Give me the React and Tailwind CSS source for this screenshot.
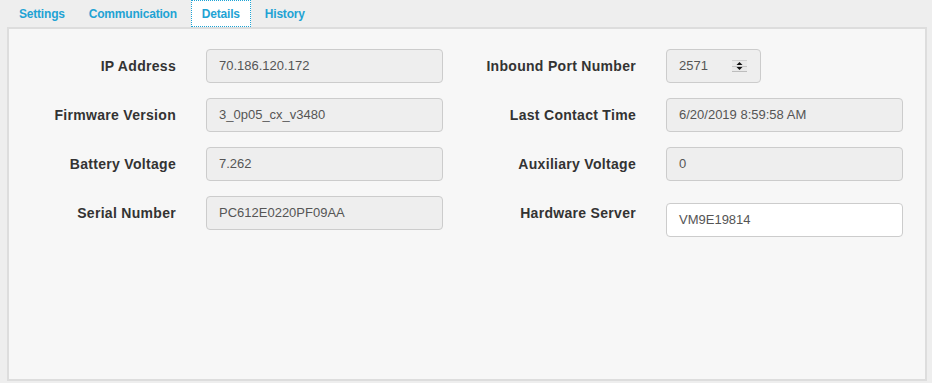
import React from "react";

const font = { fontFamily: '"Liberation Sans", Arial, sans-serif' };

function Label({ children }) {
  return (
    <div className="w-[167px] shrink-0 text-right text-[14px] font-bold leading-[16px] tracking-[0.3px] text-[#333]">
      {children}
    </div>
  );
}

function ReadOnly({ value }) {
  return (
    <div className="ml-[30px] flex h-[34px] w-[237px] shrink-0 items-center rounded-[4px] border border-[#cccccc] bg-[#eeeeee] px-[12px] text-[13px] text-[#555]">
      {value}
    </div>
  );
}

function Row({ label, value }) {
  return (
    <div className="flex h-[34px] items-center">
      <Label>{label}</Label>
      <ReadOnly value={value} />
    </div>
  );
}

function Spinner() {
  return (
    <svg width="15" height="12" viewBox="0 0 15 12" className="block">
      <rect x="0" y="0" width="15" height="12" fill="#e9e9e9" />
      <rect x="0" y="0" width="15" height="1" fill="#d0d0d0" />
      <rect x="0" y="11" width="15" height="1" fill="#bdbdbd" />
      <rect x="0" y="6" width="15" height="1" fill="#c4c4c4" />
      <polygon points="7.5,2 10.5,5 4.5,5" fill="#111" />
      <polygon points="4.5,7 10.5,7 7.5,10" fill="#111" />
    </svg>
  );
}

export default function App() {
  return (
    <div className="h-[383px] w-[932px] bg-[#eeeeee] pl-[7px] pr-[5px]" style={font}>
      <div className="flex h-[27px] items-stretch text-[12px] font-bold tracking-[-0.2px] text-[#1fa3d4]">
        <div className="mx-[2px] flex items-center px-[10px]">Settings</div>
        <div className="mx-[2px] flex items-center px-[10px]">Communication</div>
        <div className="mx-[2px] flex items-center border border-dotted border-[#1fa3d4] bg-white px-[10px]">Details</div>
        <div className="mx-[2px] flex items-center px-[10px]">History</div>
      </div>
      <div className="flex h-[354px] w-full border-2 border-[#dddddd] bg-[#f7f7f7] pt-[20px]">
        <div className="flex w-[460px] shrink-0 flex-col gap-[15px]">
          <Row label="IP Address" value="70.186.120.172" />
          <Row label="Firmware Version" value="3_0p05_cx_v3480" />
          <Row label="Battery Voltage" value="7.262" />
          <Row label="Serial Number" value="PC612E0220PF09AA" />
        </div>
        <div className="flex min-w-0 flex-1 flex-col gap-[15px]">
          <div className="flex h-[34px] items-center">
            <Label>Inbound Port Number</Label>
            <div className="ml-[30px] flex h-[34px] w-[95px] shrink-0 items-center justify-between rounded-[4px] border border-[#cccccc] bg-[#eeeeee] pl-[12px] pr-[13px] text-[13px] text-[#555]">
              <span>2571</span>
              <Spinner />
            </div>
          </div>
          <Row label="Last Contact Time" value="6/20/2019 8:59:58 AM" />
          <Row label="Auxiliary Voltage" value="0" />
          <div className="flex items-start">
            <div className="flex h-[34px] items-center">
              <Label>Hardware Server</Label>
            </div>
            <div className="ml-[30px] mt-[7px] flex h-[34px] w-[237px] shrink-0 items-center rounded-[4px] border border-[#cccccc] bg-white px-[12px] text-[13px] text-[#555]">
              VM9E19814
            </div>
          </div>
        </div>
      </div>
    </div>
  );
}
